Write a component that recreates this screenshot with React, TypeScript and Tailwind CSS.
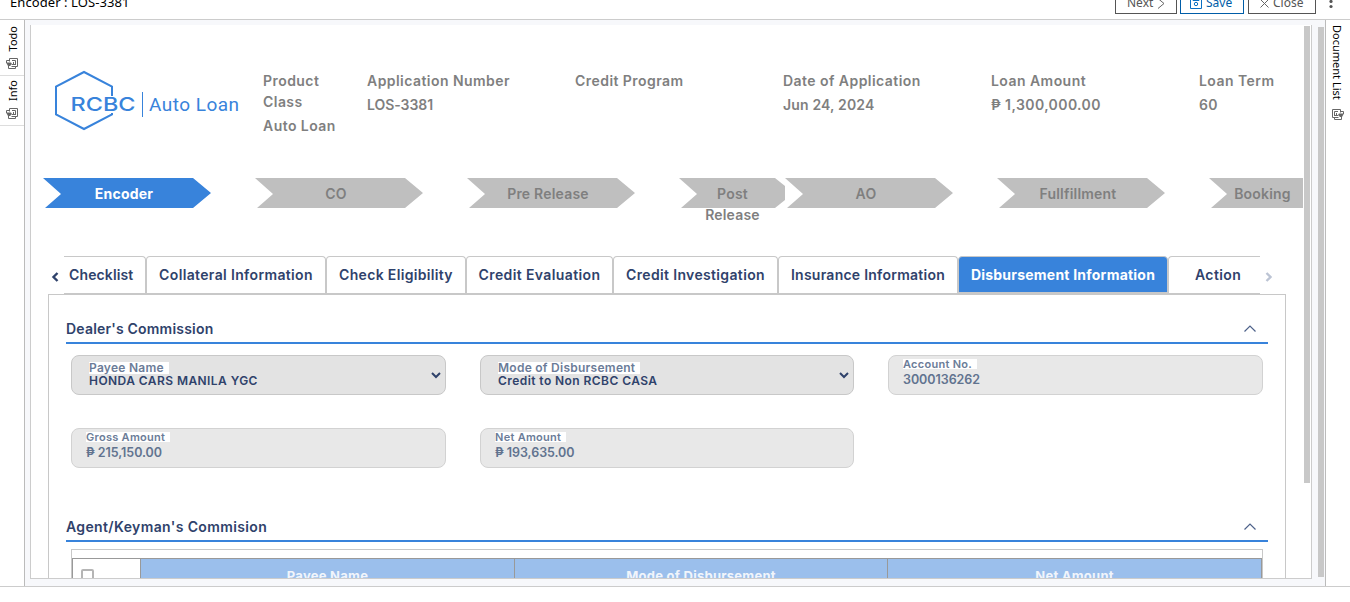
import React from "react";

const steps = [
  { label: "Encoder", on: true },
  { label: "CO" },
  { label: "Pre Release" },
  { label: "Post Release", short: true },
  { label: "AO" },
  { label: "Fullfillment" },
  { label: "Booking", last: true },
];

const tabs = [
  { label: "Collateral Information", w: "w-[180px]", t: "tracking-[0.35px]" },
  { label: "Check Eligibility", w: "w-[140px]", t: "tracking-[0.33px]" },
  { label: "Credit Evaluation", w: "w-[147px]", t: "tracking-[0.38px]" },
  { label: "Credit Investigation", w: "w-[165px]", t: "tracking-[0.35px]" },
  { label: "Insurance Information", w: "w-[180px]", t: "tracking-[0.25px]" },
];

const facts = [
  { label: "Application Number", value: "LOS-3381", t: "tracking-[-0.05px]" },
  { label: "Credit Program", value: "", t: "" },
  { label: "Date of Application", value: "Jun 24, 2024", t: "tracking-[0.15px]" },
  { label: "Loan Amount", value: "₱ 1,300,000.00", t: "tracking-[0.4px]" },
  { label: "Loan Term", value: "60", t: "tracking-[0.3px]" },
];

function DocIcon({ flip = false }: { flip?: boolean }) {
  return (
    <svg width="12" height="11" viewBox="0 0 12 11" className={`shrink-0 ${flip ? "-scale-x-100" : ""}`} fill="none" stroke="#666" strokeWidth="1">
      <path d="M3.500 3.500V.5h8v8h-6M6 2.500h3.500M9.500 2.500v4M7.500 4v2.500M6 6.500h4M2.500 8v2.500h7V9M3 2.500H.5V5" />
      <path d="M0 4.500h5L6 6 4 8H2z" fill="#666" stroke="none" />
    </svg>
  );
}

function Step({ label, on, short, last }: { label: string; on?: boolean; short?: boolean; last?: boolean }) {
  return (
    <div className={`grid h-[30px] shrink-0 overflow-visible ${short ? "w-[106px]" : "mr-[44px] w-[168px]"}`}>
      <div className={`[grid-area:1/1] h-[30px] ${on ? "bg-[#3883db]" : "bg-[#bfbfbf]"} ${short ? "[clip-path:polygon(0_0,96px_0,106px_8px,106px_22px,96px_30px,2px_30px,18px_16px)]" : "[clip-path:polygon(0_0,150px_0,168px_15px,150px_30px,2px_30px,18px_16px)]"}`} />
      <div className={`z-10 flex justify-center pt-[5px] text-center text-[14px] leading-[21px] tracking-[0.2px] [grid-area:1/1] ${short ? "w-[107px] px-5" : last ? "w-[107px]" : "w-[162px]"} ${on ? "font-bold text-white" : "font-semibold text-[#7f7f7f]"}`}>
        {label}
      </div>
    </div>
  );
}

function Select({ label, value }: { label: string; value: string }) {
  return (
    <div className="flex h-10 items-center justify-between rounded-lg border border-[#c8c8c8] bg-[#e3e3e3] pr-1 pl-[17px]">
      <div className="-mt-[2px] flex flex-col items-start">
        <span className="h-3 bg-white pr-[5px] text-[12px] leading-3 font-semibold tracking-[0.26px] text-[#6b7c98]">{label}</span>
        <span className="mt-px h-3 text-[12px] leading-3 font-semibold tracking-[0.43px] text-[#2f426b]">{value}</span>
      </div>
      <svg width="10" height="7" viewBox="0 0 10 7" fill="none" stroke="#2f426b" strokeWidth="2" className="mt-px">
        <path d="M1 1l4 4 4-4" />
      </svg>
    </div>
  );
}

function Field({ label, value }: { label: string; value: string }) {
  return (
    <div className="flex h-10 flex-col items-start rounded-lg border border-[#d2d2d2] bg-[#e8e8e8] pt-[3px] pl-[14px]">
      <span className="h-[10px] bg-white pr-[5px] text-[11px] leading-[11px] font-semibold tracking-[0.28px] text-[#6b7c98]">{label}</span>
      <span className="mt-1 text-[12.500px] leading-[14px] font-semibold tracking-[-0.05px] text-[#61738f]">{value}</span>
    </div>
  );
}

function SectionHead({ title, spacing }: { title: string; spacing: string }) {
  return (
    <div className="flex h-[24px] justify-between border-b-2 border-[#3883db] pr-3">
      <span className={`mt-px text-[14px] leading-4 font-semibold text-[#2f426b] ${spacing}`}>{title}</span>
      <svg width="12" height="7" viewBox="0 0 12 7" fill="none" stroke="#4d618a" strokeWidth="1.2" className="mt-[5px]">
        <path d="M.5 6.500L6 1l5.500 5.500" />
      </svg>
    </div>
  );
}

export default function App() {
  return (
    <div className="flex h-[602px] w-[1350px] flex-col overflow-hidden bg-white font-['Inter',sans-serif]">
      <header className="flex h-5 shrink-0 items-end overflow-hidden border-b border-[#ccc] font-['Noto_Sans',sans-serif] text-[13px] text-[#555]">
        <span className="h-[25px] w-[1115px] pl-[10px] leading-4 tracking-[0.08px] text-black">Encoder : LOS-3381</span>
        <div className="mb-[5px] flex h-[22px] w-[62px] shrink-0 items-center border border-[#555] pl-[11px] text-[12px] leading-[22px]">
          Next
          <svg width="8" height="11" viewBox="0 0 8 11" fill="none" stroke="#666" className="ml-[4px]"><path d="M1 .5l6 5-6 5" /></svg>
        </div>
        <div className="mb-[5px] ml-[3px] flex h-[22px] w-16 shrink-0 items-center border border-[#005da8] pl-[9px] text-[12px] leading-[22px] text-[#005da8]">
          <svg width="12" height="12" viewBox="0 0 12 12" fill="none" stroke="#0a6fc2" className="mr-[4px]"><path d="M.5 .5h11v11H.5zM3 .5v3h6v-3" /><circle cx="6" cy="7" r="1.700" /></svg>
          Save
        </div>
        <div className="mb-[5px] ml-1 flex h-[22px] w-[68px] shrink-0 items-center border border-[#555] pl-[11px] text-[12px] leading-[22px]">
          <svg width="9" height="9" viewBox="0 0 9 9" fill="none" stroke="#666" className="mr-[4px]"><path d="M.5 .5l8 8M8.500 .5l-8 8" /></svg>
          Close
        </div>
        <svg width="4" height="19" viewBox="0 0 4 19" className="ml-[13px] shrink-0" fill="#555"><circle cx="2" cy="1.500" r="1.600" /><circle cx="2" cy="6.500" r="1.600" /></svg>
      </header>

      <div className="flex h-[567px] shrink-0 border-b border-[#ccc]">
        <aside className="flex w-[25px] shrink-0 flex-col border-r border-[#bbb] font-['Noto_Sans',sans-serif] text-[11px] text-black">
          <div className="flex h-14 flex-col items-center justify-end border-b border-[#ddd] pb-[6px]">
            <span className="mb-[7px] ml-[2px] rotate-180 leading-4 [writing-mode:vertical-rl]">Todo</span>
            <DocIcon />
          </div>
          <div className="flex h-[50px] flex-col items-center justify-end border-b border-[#ddd] pb-[6px]">
            <span className="mb-[7px] ml-[2px] rotate-180 leading-4 [writing-mode:vertical-rl]">Info</span>
            <DocIcon />
          </div>
        </aside>

        <main className="flex min-w-0 flex-1 bg-[#f7f8fb] pt-[5px] pl-[5px]">
          <div className="flex h-[554px] w-[1282px] shrink-0 overflow-hidden border-x border-b border-[#ccc] bg-white">
            <div className="w-[1272px] shrink-0 overflow-hidden">
              <section className="flex h-[153px] w-[1400px] pt-[45px] text-[14px] font-semibold tracking-[0.45px] text-[#7f7f7f]">
                <svg width="190" height="62" viewBox="0 0 190 62" className="ml-6 shrink-0">
                  <path d="M57 26V16.500L29 2 1 16.500V44.500L29 59 57 44.500V43" fill="none" stroke="#3883db" strokeWidth="2" />
                  <text x="15.500" y="41" fontSize="19" fontWeight="500" textLength="65" lengthAdjust="spacingAndGlyphs" fill="#3883db" letterSpacing="0">RCBC</text>
                  <path d="M87.500 22V47" stroke="#3883db" />
                  <text x="94" y="41" fontSize="19" fontWeight="400" fontFamily="Roboto" letterSpacing="0" textLength="90" lengthAdjust="spacing" fill="#3883db">Auto Loan</text>
                </svg>
                <div className="ml-[18px] flex w-[104px] shrink-0 flex-col">
                  <span className="w-[70px] leading-[21px]">Product Class</span>
                  <span className="mt-[3px] leading-[21px]">Auto Loan</span>
                </div>
                {facts.map((f) => (
                  <div key={f.label} className="flex w-[208px] shrink-0 flex-col">
                    <span className="leading-[21px]">{f.label}</span>
                    <span className={`mt-[3px] leading-[21px] ${f.t}`}>{f.value}</span>
                  </div>
                ))}
              </section>

              <section className="flex h-[78px] pl-3">
                {steps.map((s) => <Step key={s.label} {...s} />)}
              </section>

              <nav className="flex h-[38px] w-[1260px] pl-5 text-[14px] font-semibold text-[#2f426b]">
                <svg width="8" height="10" viewBox="0 0 8 10" fill="none" stroke="#2f426b" strokeWidth="2.400" className="mt-[16px] mr-[5px] shrink-0"><path d="M6.500 1l-4 4 4 4" /></svg>
                <div className="flex w-[1196px] shrink-0 overflow-hidden border-b border-[#c8c8c8] leading-[35px]">
                  <div className="w-[82px] shrink-0 rounded-tr border-t border-r border-[#c8c8c8] pl-[5px] tracking-[0.12px]">Checklist</div>
                  {tabs.map((t) => (
                    <div key={t.label} className={`shrink-0 rounded-t border-t border-r border-l border-[#c8c8c8] text-center ${t.w} ${t.t}`}>{t.label}</div>
                  ))}
                  <div className="w-[210px] shrink-0 rounded-t border border-[#c8c8c8] bg-[#3883db] text-center font-bold tracking-[0.22px] text-white">Disbursement Information</div>
                  <div className="w-[110px] shrink-0 rounded-t border-t border-l border-[#c8c8c8] pl-[26px] tracking-[0.4px]">Action</div>
                </div>
                <svg width="8" height="10" viewBox="0 0 8 10" fill="none" stroke="#bcc4d4" strokeWidth="2.400" className="mt-[16px] ml-[5px] shrink-0"><path d="M1.500 1l4 4-4 4" /></svg>
              </nav>

              <section className="ml-[17px] h-[300px] w-[1238px] border border-[#c8c8c8] px-[17px] pt-[25px]">
                <SectionHead title="Dealer's Commission" spacing="tracking-[0.2px]" />
                <div className="grid grid-cols-[375px_374px_375px] gap-x-[34px] gap-y-[33px] pt-[11px] pl-[5px]">
                  <Select label="Payee Name" value="HONDA CARS MANILA YGC" />
                  <Select label="Mode of Disbursement" value="Credit to Non RCBC CASA" />
                  <Field label="Account No." value="3000136262" />
                  <Field label="Gross Amount" value="₱ 215,150.00" />
                  <Field label="Net Amount" value="₱ 193,635.00" />
                </div>
                <div className="h-[50px]" />
                <SectionHead title="Agent/Keyman's Commision" spacing="tracking-[0.37px]" />
                <div className="mt-[7px] ml-[5px] w-[1192px] border border-[#c8c8c8] pt-2">
                  <div className="flex h-10 border border-[#999] text-[13px] font-bold tracking-[0.25px] text-[#f1f5fb]">
                    <div className="w-[68px] shrink-0 border-r border-[#999] pt-[10px] pl-2">
                      <div className="size-[13px] rounded-[2px] border-2 border-[#b5b5b5]" />
                    </div>
                    <div className="w-[374px] shrink-0 border-r border-[#999] bg-[#9bbfec] pt-[9px] text-center leading-4">Payee Name</div>
                    <div className="w-[373px] shrink-0 border-r border-[#999] bg-[#9bbfec] pt-[9px] text-center leading-4">Mode of Disbursement</div>
                    <div className="flex-1 bg-[#9bbfec] pt-[9px] text-center leading-4">Net Amount</div>
                  </div>
                </div>
              </section>
            </div>
            <div className="mt-px ml-px h-[457px] w-[6px] bg-[#c8c8c8]" />
          </div>
          <div className="mt-[2px] ml-[6px] h-[550px] w-[6px] bg-[#c8c8c8]" />
        </main>

        <aside className="flex w-[25px] shrink-0 flex-col items-center border-l border-[#bbb] pt-[5px] font-['Noto_Sans',sans-serif] text-[11px] text-black">
          <span className="mr-[3px] mb-[9px] leading-4 [writing-mode:vertical-rl]">Document List</span>
          <DocIcon flip />
        </aside>
      </div>
    </div>
  );
}
